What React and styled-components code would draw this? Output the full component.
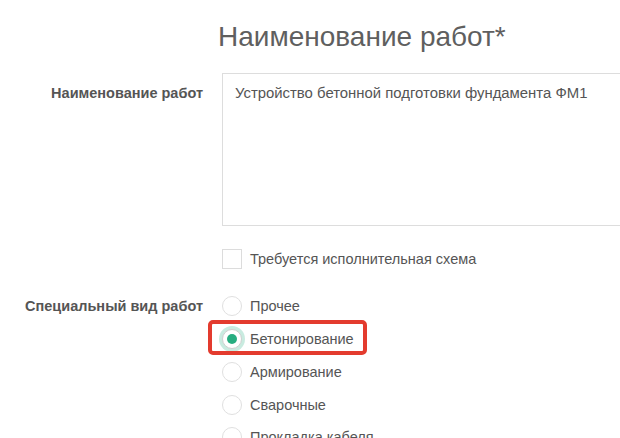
import React, { useState } from 'react';
import styled, { createGlobalStyle } from 'styled-components';

const Global = createGlobalStyle`
  body {
    margin: 0;
    background: #fff;
    font-family: "Liberation Sans", Arial, sans-serif;
    color: #555;
  }
`;

const Page = styled.div`
  width: 620px;
  height: 438px;
  overflow: hidden;
`;

const Title = styled.h1`
  margin: 0;
  padding: 20px 0 0 218px;
  font-size: 28px;
  font-weight: normal;
  line-height: 34px;
  color: #5f5f5f;
  white-space: nowrap;
`;

const Row = styled.div`
  display: grid;
  grid-template-columns: 203px 1fr;
  column-gap: 19px;
  margin-top: ${(p) => p.$top}px;
`;

const Label = styled.div`
  text-align: right;
  font-size: 14.5px;
  font-weight: bold;
  color: #555;
  padding-top: ${(p) => p.$pad}px;
  line-height: 16px;
  white-space: nowrap;
`;

const Field = styled.div`
  display: flex;
  flex-direction: column;
`;

const Area = styled.textarea`
  box-sizing: border-box;
  width: 420px;
  height: 153px;
  border: 1px solid #ddd;
  border-radius: 0;
  padding: 11px 12px;
  font-family: "Liberation Sans", Arial, sans-serif;
  font-size: 14.9px;
  line-height: 17px;
  color: #555;
  resize: none;
  outline: none;
`;

const CheckLine = styled.label`
  display: flex;
  align-items: center;
  gap: 8px;
  margin-top: 23px;
  font-size: 14.5px;
  color: #555;
  height: 20px;
  white-space: nowrap;
`;

const Box = styled.span`
  box-sizing: border-box;
  width: 20px;
  height: 20px;
  border: 1px solid #dcdcdc;
  background: #fff;
`;

const Options = styled.div`
  display: flex;
  flex-direction: column;
`;

const Option = styled.label`
  position: relative;
  display: flex;
  align-items: center;
  gap: 8px;
  height: 32.75px;
  font-size: 14.5px;
  color: #555;
  cursor: pointer;
  white-space: nowrap;

  ${(p) =>
    p.$marked &&
    `
    &::after {
      content: '';
      position: absolute;
      left: -14px;
      top: -3px;
      width: 159px;
      height: 35px;
      box-sizing: border-box;
      border: 4px solid #e33b2e;
      border-radius: 5px;
    }
  `}
`;

const Radio = styled.span`
  box-sizing: border-box;
  width: 20px;
  height: 20px;
  border-radius: 50%;
  border: 1px solid #e0e0e0;
  background: #fff;
  display: flex;
  align-items: center;
  justify-content: center;
  flex-shrink: 0;

  ${(p) =>
    p.$on &&
    `
    border-color: #cfcfcf;
    box-shadow: 0 0 0 3px #c9ebe0;
    &::before {
      content: '';
      width: 10px;
      height: 10px;
      border-radius: 50%;
      background: #27ad80;
    }
  `}
`;

const kinds = ['Прочее', 'Бетонирование', 'Армирование', 'Сварочные', 'Прокладка кабеля'];

export default function App() {
  const [kind, setKind] = useState('Бетонирование');

  return (
    <Page>
      <Global />
      <Title>Наименование работ*</Title>
      <Row $top={19}>
        <Label $pad={12}>Наименование работ</Label>
        <Field>
          <Area defaultValue="Устройство бетонной подготовки фундамента ФМ1" />
          <CheckLine>
            <Box />
            Требуется исполнительная схема
          </CheckLine>
        </Field>
      </Row>
      <Row $top={21}>
        <Label $pad={8}>Специальный вид работ</Label>
        <Options>
          {kinds.map((k) => (
            <Option key={k} $marked={k === 'Бетонирование'} onClick={() => setKind(k)}>
              <Radio $on={kind === k} />
              {k}
            </Option>
          ))}
        </Options>
      </Row>
    </Page>
  );
}
